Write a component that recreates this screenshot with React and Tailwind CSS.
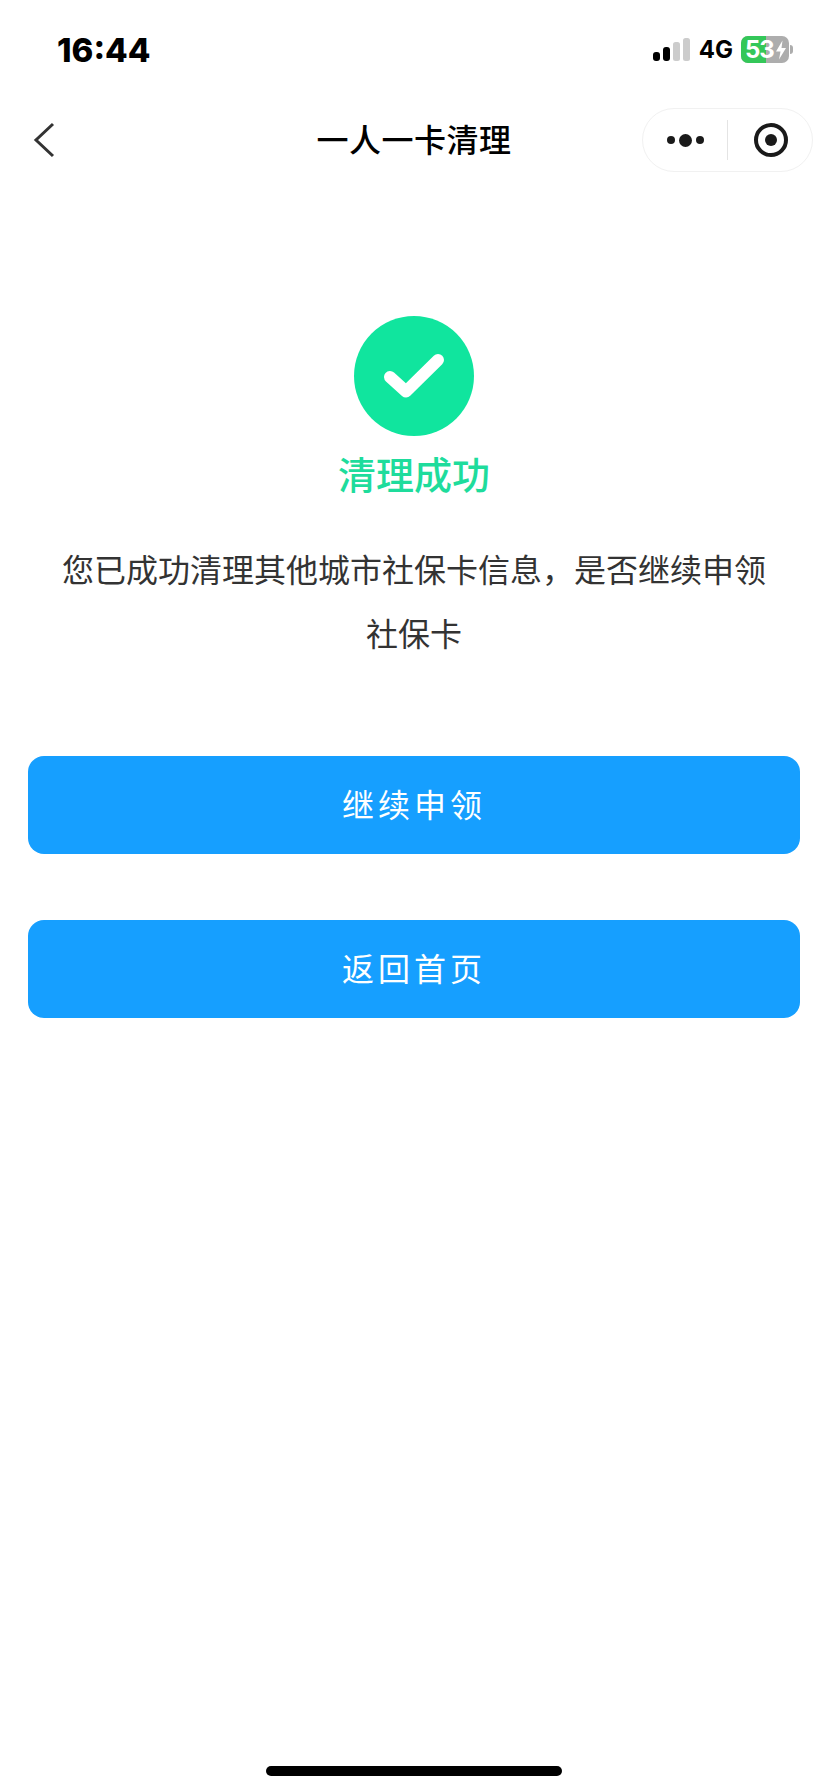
import React from "react";

const cjk = "font-['Noto_Sans_CJK_SC','Noto_Sans',sans-serif]";

function Signal() {
  return (
    <svg width="37" height="23" viewBox="0 0 37 23" className="block">
      <rect x="0" y="14" width="7" height="9" rx="3" fill="#000" />
      <rect x="10" y="9" width="7" height="14" rx="3" fill="#000" />
      <rect x="20" y="4" width="7" height="19" rx="2.5" fill="#ccc" />
      <rect x="30" y="0" width="7" height="23" rx="2.5" fill="#ccc" />
    </svg>
  );
}

function Battery() {
  return (
    <div className="flex items-center">
      <div className="relative w-[48px] h-[27px] rounded-[7px] bg-[#adadad]">
        <div className="w-[25px] h-full rounded-l-[7px] bg-[#34c759]" />
        <div className="absolute left-[4px] top-0 h-full flex items-center font-['Inter',sans-serif] font-bold text-[24px] leading-none text-white tracking-[-1px]">
          53
        </div>
        <svg width="12" height="20" viewBox="0 0 12 20" className="absolute right-[2px] top-[4px]">
          <path d="M7.5 0.5 L1 11.5 H5.5 L4 19.5 L11 8 H6.5 Z" fill="#fff" />
        </svg>
      </div>
      <div className="w-[3px] h-[9px] ml-[1px] rounded-r-[3px] bg-[#adadad]" />
    </div>
  );
}

function Capsule() {
  return (
    <div className="w-[171px] h-[64px] rounded-full border border-[#f1f1f1] flex items-center bg-white">
      <div className="flex-1 flex items-center justify-center gap-[4px] pl-[1px]">
        <span className="w-[8px] h-[8px] rounded-full bg-[#1a1a1a]" />
        <span className="w-[13px] h-[13px] rounded-full bg-[#1a1a1a]" />
        <span className="w-[8px] h-[8px] rounded-full bg-[#1a1a1a]" />
      </div>
      <div className="w-px h-[40px] bg-[#e4e4e4]" />
      <div className="flex-1 flex items-center justify-center pl-[2px]">
        <div className="w-[34px] h-[34px] rounded-full border-[4px] border-[#1a1a1a] flex items-center justify-center">
          <span className="w-[12px] h-[12px] rounded-full bg-[#1a1a1a]" />
        </div>
      </div>
    </div>
  );
}

function BlueButton({ children }) {
  return (
    <button className="w-full h-[98px] pb-[4px] rounded-[16px] bg-[#169fff] text-white text-[32px] tracking-[4px] font-normal flex items-center justify-center">
      {children}
    </button>
  );
}

export default function App() {
  return (
    <div className={`min-h-screen bg-white flex flex-col ${cjk}`}>
      {/* status bar */}
      <div className="h-[100px] pl-[57px] pr-[35px] flex items-start justify-between">
        <div className="pt-[31px] font-['Inter',sans-serif] font-extrabold text-[33px] leading-[38px] text-black">16:44</div>
        <div className="pt-[36px] flex items-center">
          <Signal />
          <div className="ml-[9px] mr-[8px] font-['Inter',sans-serif] font-bold text-[24px] leading-[27px] text-black">4G</div>
          <Battery />
        </div>
      </div>

      {/* nav bar */}
      <div className="relative h-[80px] pl-[33px] pr-[15px] flex items-center justify-between">
        <svg width="22" height="36" viewBox="0 0 22 36" fill="none" className="block">
          <path d="M20 2 L3 18 L20 34" stroke="#333" strokeWidth="3" />
        </svg>
        <div className="absolute inset-x-0 top-0 h-full pb-[4px] flex items-center justify-center text-[32px] font-medium tracking-[0.5px] text-black pointer-events-none">
          一人一卡清理
        </div>
        <Capsule />
      </div>

      {/* result */}
      <div className="flex flex-col items-center pt-[136px]">
        <div className="w-[120px] h-[120px] rounded-full bg-[#10e59e] flex items-center justify-center">
          <svg width="60" height="44" viewBox="0 0 60 44" fill="none">
            <path d="M6 23 L22 37.5 L54 6" stroke="#fff" strokeWidth="12" strokeLinecap="round" strokeLinejoin="round" />
          </svg>
        </div>
        <div className="mt-[12px] text-[38px] leading-[50px] font-medium text-[#1edc9c]">清理成功</div>
        <p className="mt-[38px] w-[720px] text-center text-[32px] leading-[64px] text-[#333]">
          您已成功清理其他城市社保卡信息，是否继续申领社保卡
        </p>
      </div>

      {/* actions */}
      <div className="px-[28px] pt-[92px] flex flex-col gap-[66px]">
        <BlueButton>继续申领</BlueButton>
        <BlueButton>返回首页</BlueButton>
      </div>

      {/* home indicator */}
      <div className="mt-auto pb-[16px] flex justify-center">
        <div className="w-[296px] h-[10px] rounded-full bg-black" />
      </div>
    </div>
  );
}
